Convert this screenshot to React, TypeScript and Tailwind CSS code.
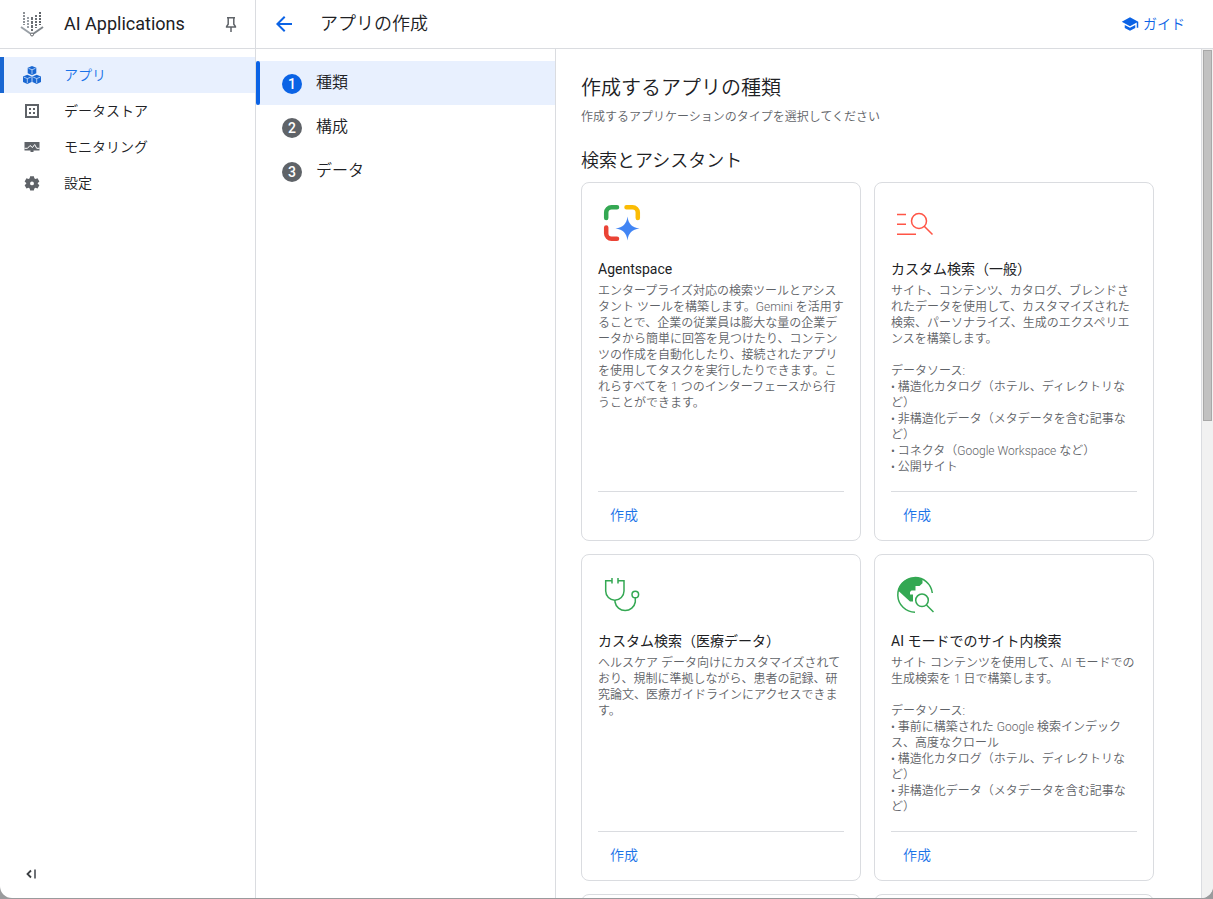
import type { ReactNode } from "react";
import { clsx } from "clsx";

function LogoIcon() {
  return (
    <svg width="24" height="28" viewBox="0 0 24 28" fill="none">
      <g strokeWidth="2">
        <path d="M4 2v13" strokeDasharray="2 1" stroke="#8d9196" />
        <path d="M8 7v11" strokeDasharray="2 1" stroke="#9aa0a6" />
        <path d="M12 7v14" strokeDasharray="3 1" stroke="#6b6f74" />
        <path d="M16 5v13" strokeDasharray="2 1" stroke="#6b6f74" />
        <path d="M20 2v13" strokeDasharray="2 1" stroke="#5f6368" />
        <path d="M1 17l10 7" stroke="#9aa0a6" />
        <path d="M23 17l-10 7" stroke="#80868b" />
      </g>
      <circle cx="12" cy="24.500" r="1.500" stroke="#5f6368" fill="#fff" />
    </svg>
  );
}

function PinIcon() {
  return (
    <svg width="18" height="18" viewBox="0 0 18 18" fill="none" stroke="#5f6368" strokeWidth="1.500">
      <path d="M6 2.800h8M7.200 2.800v6.400L5.600 11.500v.5h8.800v-.5l-1.600-2.300V2.800M10 12v5" />
    </svg>
  );
}

function Cube({ x, y }: { x: number; y: number }) {
  return (
    <g transform={`translate(${x} ${y})`}>
      <path d="M4.300 0l4.300 1.700v5.600L4.300 9.200 0 7.300V1.700z" fill="currentColor" />
      <path d="M.8 2.300l3.500 1.500 3.500-1.500M4.300 3.800v4.600" stroke="#e8f0fe" strokeWidth=".7" fill="none" />
    </g>
  );
}

function AppsIcon() {
  return (
    <svg width="18" height="18" viewBox="0 0 18 18">
      <Cube x={4.7} y={0} />
      <Cube x={0} y={8.8} />
      <Cube x={9.4} y={8.8} />
    </svg>
  );
}

function DataStoreIcon() {
  return (
    <svg width="18" height="18" viewBox="0 0 18 18" fill="currentColor">
      <path d="M2 2h14v14H2zM4 4v10h10V4z" fillRule="evenodd" />
      <path d="M6 6h2v2H6zM10 6h2v2h-2zM6 10h2v2H6zM10 10h2v2h-2z" />
    </svg>
  );
}

function MonitoringIcon() {
  return (
    <svg width="18" height="18" viewBox="0 0 18 18">
      <path d="M1.500 4h15v8.500h-6v1.500h-3v-1.500h-6z" fill="currentColor" />
      <path d="M1.500 10.300h3L7 7.500l2.500 2 2.200-3 2 3.800h2.800" fill="none" stroke="#fff" strokeWidth="1" />
    </svg>
  );
}

function SettingsIcon() {
  return (
    <svg width="18" height="18" viewBox="0 0 24 24" fill="currentColor">
      <path
        fillRule="evenodd"
        d="M9.500 3h5l.6 2.800 1.500.9 2.800-.9 2.400 4.200-2.100 1.900v1.200l2.100 1.900-2.400 4.200-2.800-.9-1.500.9-.6 2.700h-5l-.6-2.700-1.500-.9-2.800.9L2.200 15l2.100-1.900v-1.200L2.200 10l2.400-4.200 2.800.9 1.500-.9zM12 9.900a2.600 2.600 0 100 5.200 2.600 2.600 0 000-5.200z"
      />
    </svg>
  );
}

function BackIcon() {
  return (
    <svg width="24" height="24" viewBox="0 0 24 24" fill="#0b63e5">
      <path d="M20 11H7.830l5.590-5.590L12 4l-8 8 8 8 1.410-1.410L7.830 13H20v-2z" />
    </svg>
  );
}

function GuideIcon() {
  return (
    <svg width="18" height="18" viewBox="0 0 24 24" fill="currentColor">
      <path d="M5 13.180v4L12 21l7-3.820v-4L12 17l-7-3.820zM12 3L1 9l11 6 9-4.910V17h2V9L12 3z" />
    </svg>
  );
}

function CollapseIcon() {
  return (
    <svg width="12" height="12" viewBox="0 0 12 12" fill="none" strokeWidth="1.800">
      <path d="M6 2.500L2.500 6 6 9.500" stroke="#3c4043" />
      <path d="M10 1.500v9" stroke="#5f6368" />
    </svg>
  );
}

function AgentspaceIcon() {
  return (
    <svg width="48" height="48" viewBox="0 0 48 48" fill="none" strokeWidth="4.500" strokeLinecap="round">
      <path d="M8.200 19v-5.500a5.300 5.300 0 015.300-5.300H19" stroke="#34a853" />
      <path d="M28.500 8.200h6a5.300 5.300 0 015.300 5.300V19" stroke="#fbbc04" />
      <path d="M8.200 28.500v6a5.300 5.300 0 005.300 5.300H19" stroke="#ea4335" />
      <path
        d="M29.500 17.500c1 7.500 4.500 11 12 12-7.500 1-11 4.500-12 12-1-7.500-4.500-11-12-12 7.500-1 11-4.500 12-12z"
        fill="#4285f4"
      />
    </svg>
  );
}

function SearchListIcon() {
  return (
    <svg width="48" height="48" viewBox="0 0 48 48" fill="none" stroke="#ff5546" strokeWidth="1.500">
      <path d="M6 15.500h9M6 25.300h9M6 35.200h19M33 27l8.500 8.500" />
      <circle cx="28" cy="22" r="7.500" />
    </svg>
  );
}

function StethoscopeIcon() {
  return (
    <svg width="48" height="48" viewBox="0 0 48 48" fill="none" stroke="#34a853" strokeWidth="1.500">
      <path d="M14 7v5.500M14 9.700H7.700V20a9 9 0 0018.300 0V9.700h-6M20 7v5.500" />
      <path d="M17 29v2a10.300 10.300 0 0020.300 0V27" />
      <circle cx="37.300" cy="23.500" r="3.300" />
    </svg>
  );
}

function GlobeSearchIcon() {
  return (
    <svg width="48" height="48" viewBox="0 0 48 48" fill="none" stroke="#34a853" strokeWidth="1.500">
      <path d="M24 41.200A17.300 17.300 0 1141.300 22" />
      <path
        d="M24 6.500c3 0 5.500.7 7.500 2v3.700l-3 2.800h-4v4.500h-4l-1.500 1.500v2.500h3v7h-3L7 19.500C9 12 15.500 6.500 24 6.500z"
        fill="#34a853"
        stroke="none"
      />
      <circle cx="31" cy="29.300" r="6.300" />
      <path d="M35.500 34l7 7" />
    </svg>
  );
}

const navItems = [
  { label: "アプリ", icon: <AppsIcon />, active: true },
  { label: "データストア", icon: <DataStoreIcon />, active: false },
  { label: "モニタリング", icon: <MonitoringIcon />, active: false },
  { label: "設定", icon: <SettingsIcon />, active: false },
];

const steps = ["種類", "構成", "データ"];

type AppType = {
  title: string;
  icon: ReactNode;
  description: string;
  sources?: string[];
};

const appTypes: AppType[] = [
  {
    title: "Agentspace",
    icon: <AgentspaceIcon />,
    description:
      "エンタープライズ対応の検索ツールとアシスタント ツールを構築します。Gemini を活用することで、企業の従業員は膨大な量の企業データから簡単に回答を見つけたり、コンテンツの作成を自動化したり、接続されたアプリを使用してタスクを実行したりできます。これらすべてを 1 つのインターフェースから行うことができます。",
  },
  {
    title: "カスタム検索（一般）",
    icon: <SearchListIcon />,
    description:
      "サイト、コンテンツ、カタログ、ブレンドされたデータを使用して、カスタマイズされた検索、パーソナライズ、生成のエクスペリエンスを構築します。",
    sources: [
      "構造化カタログ（ホテル、ディレクトリなど）",
      "非構造化データ（メタデータを含む記事など）",
      "コネクタ（Google Workspace など）",
      "公開サイト",
    ],
  },
  {
    title: "カスタム検索（医療データ）",
    icon: <StethoscopeIcon />,
    description:
      "ヘルスケア データ向けにカスタマイズされており、規制に準拠しながら、患者の記録、研究論文、医療ガイドラインにアクセスできます。",
  },
  {
    title: "AI モードでのサイト内検索",
    icon: <GlobeSearchIcon />,
    description: "サイト コンテンツを使用して、AI モードでの生成検索を 1 日で構築します。",
    sources: [
      "事前に構築された Google 検索インデックス、高度なクロール",
      "構造化カタログ（ホテル、ディレクトリなど）",
      "非構造化データ（メタデータを含む記事など）",
    ],
  },
];

function AppTypeCard({ title, icon, description, sources }: AppType) {
  return (
    <article className="flex flex-col rounded-lg border border-[#dadce0] px-4 pt-4 pb-[9px]">
      <div className="h-12">{icon}</div>
      <h3 className="mt-3 text-sm leading-5 font-normal text-[#202124]">{title}</h3>
      <div className="mt-1 -mr-0.5 mb-4 grow text-xs leading-4 text-[#5f6368]">
        <p>{description}</p>
        {sources && (
          <>
            <p className="mt-4">データソース:</p>
            <ul>
              {sources.map((source) => (
                <li key={source}>{`• ${source}`}</li>
              ))}
            </ul>
          </>
        )}
      </div>
      <div className="border-t border-[#dadce0] pt-[7px]">
        <button type="button" className="h-8 px-3 text-sm text-[#1a73e8]">
          作成
        </button>
      </div>
    </article>
  );
}

export default function App() {
  return (
    <div className="h-screen bg-[#9a9b9d] pb-px font-['Roboto','Noto_Sans_CJK_JP',sans-serif] font-[350] text-[#202124]">
      <div className="flex h-full overflow-hidden rounded-b-xl bg-white">
        {/* Sidebar */}
        <aside className="flex w-64 shrink-0 flex-col border-r border-[#dadce0]">
          <div className="flex h-[49px] shrink-0 items-center border-b border-[#dadce0] pr-4 pl-5">
            <LogoIcon />
            <span className="ml-5 grow text-lg font-normal">AI Applications</span>
            <button type="button" aria-label="固定">
              <PinIcon />
            </button>
          </div>
          <nav className="mt-2 grow">
            {navItems.map((item) => (
              <a
                key={item.label}
                href="#"
                className={clsx(
                  "flex h-9 items-center gap-[23px] border-l-4 pl-[19px] text-sm",
                  item.active
                    ? "border-[#1967d2] bg-[#e8f0fe] text-[#1967d2]"
                    : "border-transparent text-[#5f6368]"
                )}
              >
                {item.icon}
                <span className={item.active ? "text-[#1a73e8]" : "text-[#202124]"}>{item.label}</span>
              </a>
            ))}
          </nav>
          <div className="flex h-12 items-center pl-[25px]">
            <button type="button" aria-label="折りたたむ">
              <CollapseIcon />
            </button>
          </div>
        </aside>

        <div className="flex min-w-0 grow flex-col">
          <header className="flex h-[49px] shrink-0 items-center border-b border-[#dadce0] pr-7 pl-4">
            <button type="button" aria-label="戻る">
              <BackIcon />
            </button>
            <h1 className="ml-6 grow text-lg font-[350]">アプリの作成</h1>
            <a href="#" className="flex items-center gap-1 text-sm text-[#0b63e5]">
              <GuideIcon />
              ガイド
            </a>
          </header>

          <div className="flex min-h-0 grow">
            {/* Steps */}
            <ol className="w-[300px] shrink-0 border-r border-[#dadce0] pt-3">
              {steps.map((step, i) => (
                <li key={step} className={clsx("flex h-11", i === 0 && "bg-[#e8f0fe]")}>
                  <div className={clsx("w-1 rounded-sm", i === 0 && "bg-[#0b63e5]")} />
                  <button type="button" className="flex grow items-center gap-[14px] pl-[22px]">
                    <span
                      className={clsx(
                        "mt-[2px] flex size-5 items-center justify-center rounded-full text-sm font-medium text-white",
                        i === 0 ? "bg-[#0b63e5]" : "bg-[#5f6368]"
                      )}
                    >
                      {i + 1}
                    </span>
                    <span className="text-base">{step}</span>
                  </button>
                </li>
              ))}
            </ol>

            {/* Main content */}
            <main className="min-w-0 grow overflow-hidden pt-[25px] pl-[25px]">
              <h2 className="text-xl leading-7">作成するアプリの種類</h2>
              <p className="mt-[7px] text-xs leading-4 text-[#5f6368]">
                作成するアプリケーションのタイプを選択してください
              </p>
              <h2 className="mt-[22px] text-lg leading-7">検索とアシスタント</h2>
              <div className="mt-[7px] grid grid-cols-[repeat(auto-fill,280px)] gap-[13px]">
                {appTypes.map((appType) => (
                  <AppTypeCard key={appType.title} {...appType} />
                ))}
                <article className="h-80 rounded-lg border border-[#dadce0]" />
                <article className="h-80 rounded-lg border border-[#dadce0]" />
              </div>
            </main>

            {/* Scrollbar */}
            <div className="w-3 shrink-0 border-l border-[#dadce0] bg-[#f1f1f1] px-px pt-px">
              <div className="h-7/16 border border-[#a8a8a8] bg-[#c1c1c1]" />
            </div>
          </div>
        </div>
      </div>
    </div>
  );
}
